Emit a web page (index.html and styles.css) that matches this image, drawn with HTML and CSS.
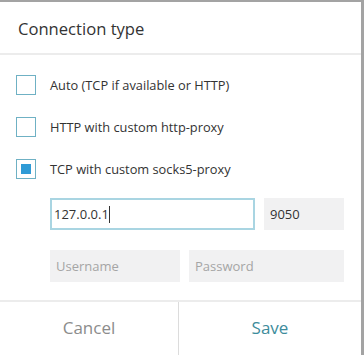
FILE: index.html
```html
<!DOCTYPE html>
<html lang="en">
<head>
  <meta charset="UTF-8" />
  <title>Connection type</title>
  <link rel="stylesheet" href="styles.css">
</head>
<body>

  <div class="dialog">
    <div class="dialog-header">Connection type</div>

    <div class="dialog-body">
      <label class="option">
        <span class="check"></span>
        <span class="option-text">Auto (TCP if available or HTTP)</span>
      </label>
      <label class="option">
        <span class="check"></span>
        <span class="option-text">HTTP with custom http-proxy</span>
      </label>
      <label class="option">
        <span class="check checked"></span>
        <span class="option-text">TCP with custom socks5-proxy</span>
      </label>

      <div class="proxy-fields">
        <div class="field-row">
          <div class="field host focused">127.0.0.1<span class="caret"></span></div>
          <div class="field port">9050</div>
        </div>
        <div class="field-row">
          <div class="field user placeholder">Username</div>
          <div class="field pass placeholder">Password</div>
        </div>
      </div>
    </div>

    <div class="dialog-footer">
      <button class="btn cancel">Cancel</button>
      <button class="btn save">Save</button>
    </div>
  </div>

</body>
</html>
```

FILE: styles.css
```css
body {
  margin: 0;
  background: #a3a3a3;
  font-family: 'Open Sans', 'Segoe UI', sans-serif;
  height: 355px;
  overflow: hidden;
}

.dialog {
  background: white;
  width: 361px;
  margin-top: 2px;
  height: 353px;
  display: flex;
  flex-direction: column;
}

.dialog-header {
  height: 51px;
  padding-left: 18px;
  font-size: 16.6px;
  line-height: 53px;
  color: #333;
  border-bottom: 2px solid #ececec;
}

.dialog-body {
  padding: 19px 0 0 16px;
  height: 226px;
  border-bottom: 2px solid #ececec;
}

.option {
  display: flex;
  align-items: center;
  height: 21px;
  margin-bottom: 21px;
  cursor: pointer;
}

.check {
  width: 18px;
  height: 18px;
  border: 1px solid #6fb1c4;
  display: flex;
  align-items: center;
  justify-content: center;
  margin-right: 14px;
}

.check.checked::after {
  content: '';
  width: 10px;
  height: 10px;
  background: #2f9bd6;
}

.option-text {
  font-size: 12.8px;
  color: #333;
}

.proxy-fields {
  margin-top: -2px;
  padding-left: 34px;
}

.field-row {
  display: flex;
  gap: 9px;
  margin-bottom: 20px;
}

.field {
  height: 32px;
  line-height: 32px;
  font-size: 13px;
  color: #333;
  background: #f1f1f2;
  padding-left: 6px;
  box-sizing: border-box;
}

.field.focused {
  background: white;
  border: 2px solid #a9d5e2;
  line-height: 28px;
  padding-left: 2px;
}

.caret {
  display: inline-block;
  width: 1px;
  height: 17px;
  background: #333;
  vertical-align: middle;
  margin-top: -2px;
}

.field.placeholder {
  color: #a5a5a5;
}

.host {
  width: 205px;
}

.port {
  width: 80px;
}

.user {
  width: 130px;
}

.pass {
  width: 155px;
}

.dialog-footer {
  display: flex;
  flex: 1;
}

.btn {
  flex: 1;
  background: none;
  border: none;
  font-family: inherit;
  font-size: 17px;
  cursor: pointer;
  padding: 0 0 2px;
}

.cancel {
  color: #8c8c8c;
  border-right: 1px solid #dcdcdc;
  flex: 0 0 179px;
}

.save {
  color: #3d8c9c;
}
```
